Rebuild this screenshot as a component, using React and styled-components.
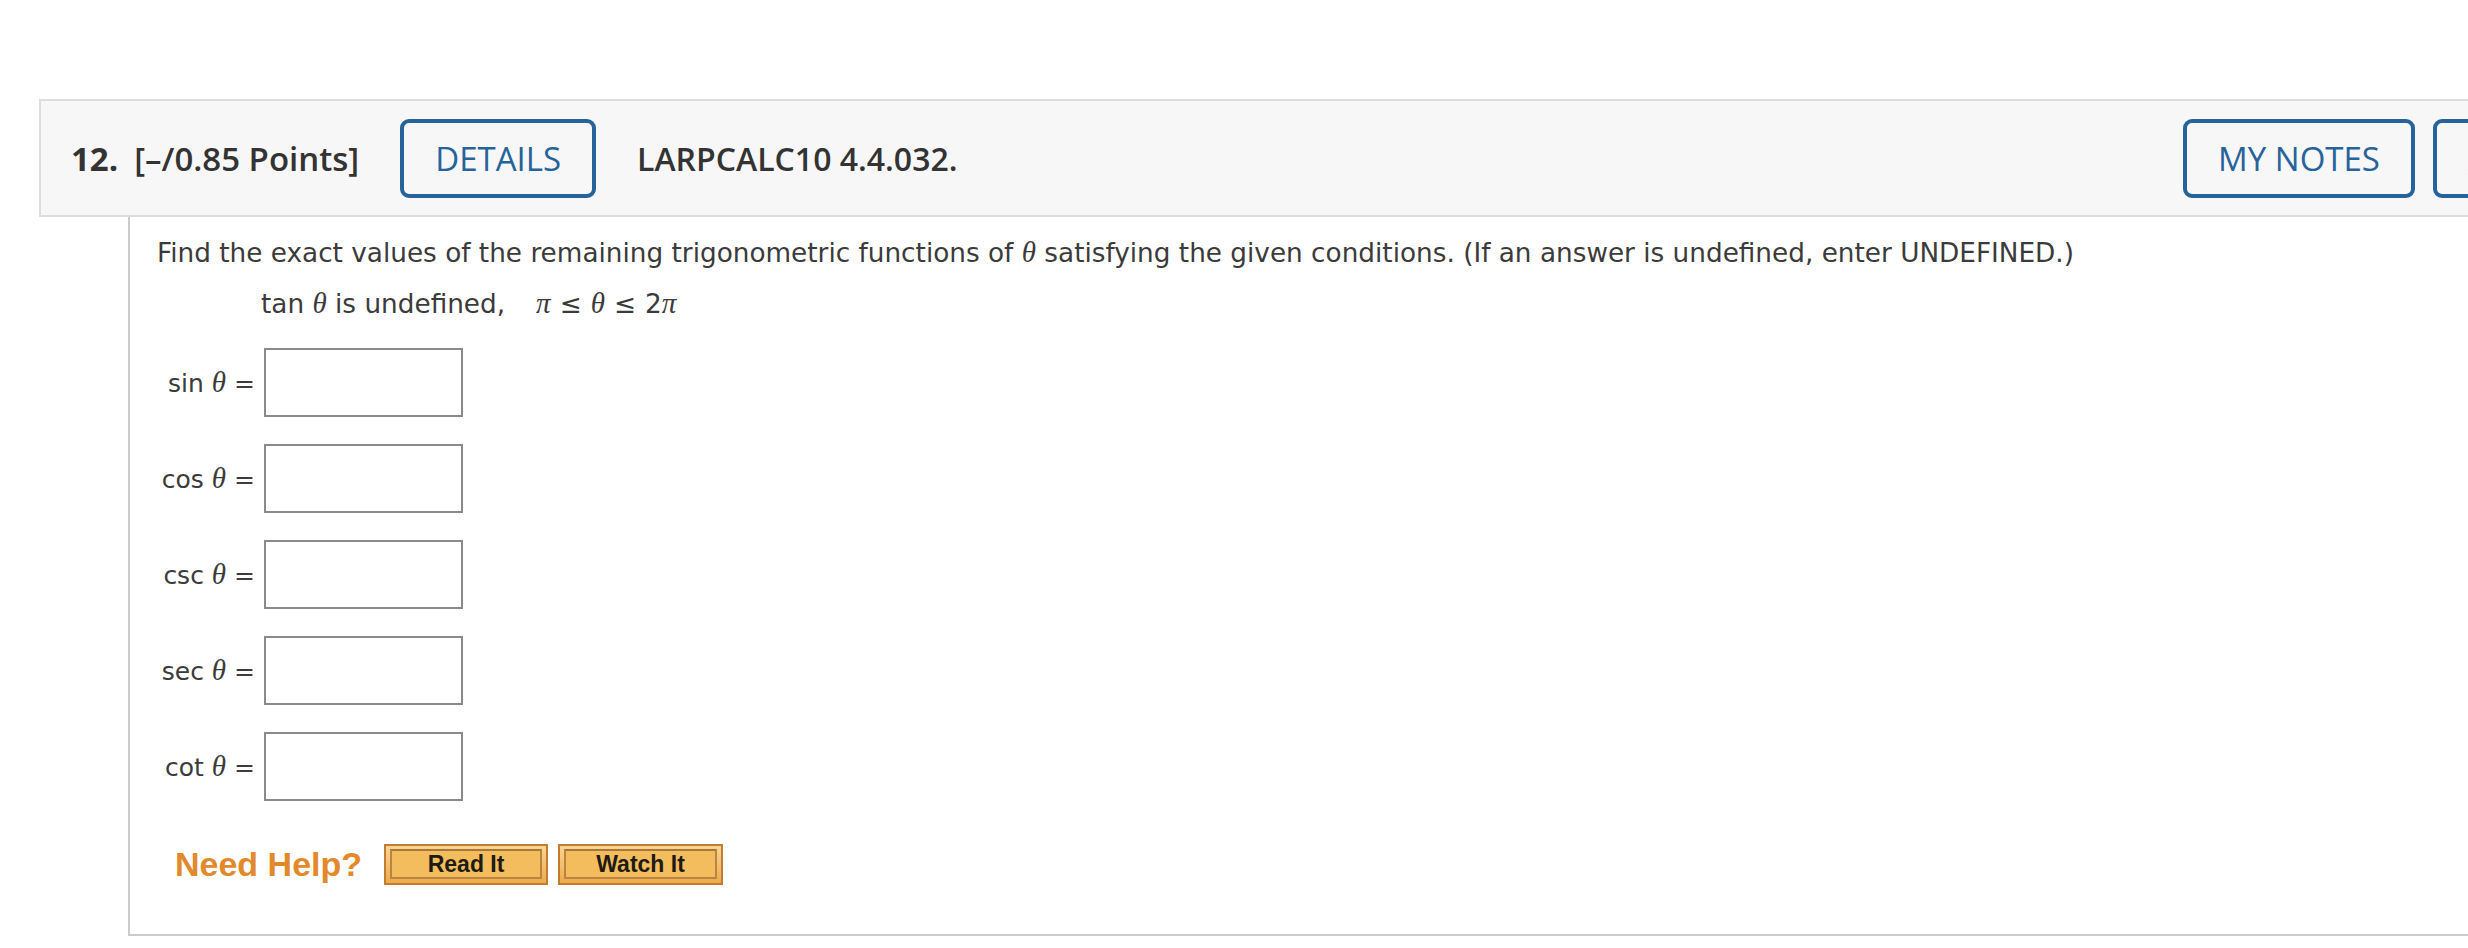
import React from 'react';
import styled, { createGlobalStyle } from 'styled-components';

const colors = {
  blue: '#27639b',
  text: '#333333',
  body: '#3b3b3b',
  headerBg: '#f7f7f7',
  headerLine: '#dddddd',
  boxLine: '#cccccc',
  field: '#8a8a8a',
  orange: '#e2892c',
};

const GlobalStyle = createGlobalStyle`
  html, body {
    margin: 0;
    padding: 0;
    background: #ffffff;
    overflow: hidden;
  }
`;

const Viewport = styled.div`
  width: 100vw;
  overflow: hidden;
`;

// the question card runs past the right edge of the window, as in the page
const Page = styled.div`
  width: 2804px;
  margin-left: 39px;
  padding-top: 99px;
`;

const Header = styled.div`
  box-sizing: border-box;
  height: 118px;
  display: flex;
  align-items: center;
  gap: 41px;
  padding: 0 32px 0 30px;
  background: ${colors.headerBg};
  border: 2px solid ${colors.headerLine};
  font-family: 'Open Sans', 'Liberation Sans', sans-serif;
  font-size: 33px;
  color: ${colors.text};
`;

const Title = styled.div`
  display: flex;
  align-items: baseline;
  gap: 16px;
  font-weight: 600;
  white-space: nowrap;
  .num {
    font-weight: 700;
  }
`;

const Tools = styled.div`
  display: flex;
  align-items: center;
  gap: 18px;
  margin-left: auto;
`;

const OutlineButton = styled.button`
  box-sizing: border-box;
  height: 79px;
  padding: 0 31px;
  background: transparent;
  border: 4px solid ${colors.blue};
  border-radius: 9px;
  color: ${colors.blue};
  font-family: 'Open Sans', 'Liberation Sans', sans-serif;
  font-size: 33px;
  font-weight: 400;
  white-space: nowrap;
  cursor: pointer;
`;

const Code = styled.div`
  font-size: 32px;
  font-weight: 600;
  white-space: nowrap;
`;

const Body = styled.div`
  margin-left: 89px;
  padding: 17px 0 49px 27px;
  border-left: 2px solid ${colors.boxLine};
  border-bottom: 2px solid ${colors.boxLine};
  font-family: 'DejaVu Sans', Verdana, sans-serif;
  font-size: 26.3px;
  color: ${colors.body};
`;

const Line = styled.div`
  line-height: 36px;
  margin-left: ${(p) => p.$indent || 0}px;
  margin-top: ${(p) => p.$top || 0}px;
  white-space: nowrap;
`;

const Var = styled.i`
  font-family: 'Liberation Serif', 'Times New Roman', serif;
  font-size: 29px;
`;

const Rel = styled.span`
  margin: 0 9px;
`;

const Gap = styled.span`
  display: inline-block;
  width: ${(p) => p.$w}px;
`;

const Answers = styled.div`
  display: flex;
  flex-direction: column;
  gap: 27px;
  margin-top: 26px;
`;

const Row = styled.div`
  display: flex;
  align-items: center;
  gap: 9px;
`;

const Label = styled.label`
  width: 98px;
  text-align: right;
  white-space: nowrap;
  font-size: 25px;
`;

const Field = styled.input`
  box-sizing: border-box;
  width: 199px;
  height: 69px;
  border: 2px solid ${colors.field};
  border-radius: 0;
  background: #ffffff;
  font-size: 25px;
  outline: none;
`;

const Help = styled.div`
  display: flex;
  align-items: center;
  margin-top: 43px;
  margin-left: 18px;
`;

const HelpTitle = styled.span`
  font-family: 'Liberation Sans', Arial, sans-serif;
  font-weight: 700;
  font-size: 34px;
  color: ${colors.orange};
  margin-right: 22px;
  white-space: nowrap;
`;

const HelpButton = styled.button`
  box-sizing: border-box;
  width: ${(p) => p.$w}px;
  height: 41px;
  margin-right: 10px;
  padding: 3px 4px 4px;
  background: linear-gradient(#f8d594, #eeab4a);
  border: 2px solid #c27d33;
  cursor: pointer;
  span {
    display: flex;
    align-items: center;
    justify-content: center;
    box-sizing: border-box;
    height: 100%;
    background: #f3bd5e;
    border: 2px solid #b98542;
    border-top-color: #a77638;
    font-family: 'Liberation Sans', Arial, sans-serif;
    font-weight: 700;
    font-size: 23px;
    color: #1e1a14;
  }
`;

const Theta = () => <Var>θ</Var>;

const fields = ['sin', 'cos', 'csc', 'sec', 'cot'];

export default function App() {
  return (
    <Viewport>
      <GlobalStyle />
      <Page>
        <Header>
          <Title>
            <span className="num">12.</span>
            <span>[–/0.85 Points]</span>
          </Title>
          <OutlineButton>DETAILS</OutlineButton>
          <Code>LARPCALC10 4.4.032.</Code>
          <Tools>
            <OutlineButton>MY NOTES</OutlineButton>
            <OutlineButton>ASK YOUR TEACHER</OutlineButton>
          </Tools>
        </Header>
        <Body>
          <Line>
            Find the exact values of the remaining trigonometric functions of <Theta /> satisfying the
            given conditions. (If an answer is undefined, enter UNDEFINED.)
          </Line>
          <Line $indent={104} $top={14}>
            tan <Theta /> is undefined,
            <Gap $w={31} />
            <Var>π</Var>
            <Rel>≤</Rel>
            <Theta />
            <Rel>≤</Rel>2<Var>π</Var>
          </Line>
          <Answers>
            {fields.map((f) => (
              <Row key={f}>
                <Label htmlFor={f}>
                  {f} <Theta /> =
                </Label>
                <Field id={f} type="text" />
              </Row>
            ))}
          </Answers>
          <Help>
            <HelpTitle>Need Help?</HelpTitle>
            <HelpButton $w={164}>
              <span>Read It</span>
            </HelpButton>
            <HelpButton $w={165}>
              <span>Watch It</span>
            </HelpButton>
          </Help>
        </Body>
      </Page>
    </Viewport>
  );
}
